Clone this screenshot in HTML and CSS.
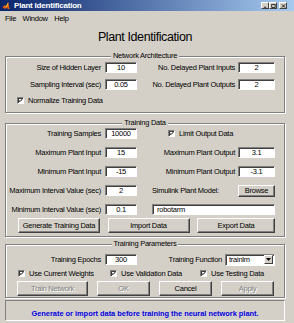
FILE: index.html
```html
<!DOCTYPE html>
<html lang="en">
<head>
    <meta charset="UTF-8">
    <title>Plant Identification</title>
    <link rel="stylesheet" href="styles.css">
</head>
<body>
    <!-- Title bar -->
    <div class="titlebar">
        <svg class="app-icon" viewBox="0 0 9 9">
            <path d="M0.5 6.5 L3 4 L4.5 5.5 L7 0.5 L8.5 8.5 L6.5 8.5 L5.5 6.5 L3.5 8.5 Z" fill="#e05a10"/>
            <path d="M3 4 L4.5 5.5 L7 0.5 L6.8 3.5 L4.8 7 Z" fill="#ffd020"/>
        </svg>
        <span class="title">Plant Identification</span>
        <div class="win-btns">
            <span class="wbtn"><svg viewBox="0 0 6 5"><rect x="1" y="3.5" width="3" height="1" fill="#000"/></svg></span>
            <span class="wbtn"><svg viewBox="0 0 6 5"><rect x="0.8" y="0.5" width="4.2" height="3.8" fill="none" stroke="#000" stroke-width="0.9"/></svg></span>
            <span class="wbtn wbtn-close"><svg viewBox="0 0 6 5"><path d="M1 0.5 L5 4.5 M5 0.5 L1 4.5" stroke="#000" stroke-width="1.1"/></svg></span>
        </div>
    </div>

    <!-- Menu bar -->
    <div class="menubar">
        <span>File</span>
        <span>Window</span>
        <span>Help</span>
    </div>

    <div class="panel">
        <h1 class="heading">Plant Identification</h1>

        <!-- Network Architecture -->
        <fieldset class="group group-arch">
            <legend>Network Architecture</legend>
            <div class="row">
                <div class="lbl c1">Size of Hidden Layer</div>
                <div class="edit e1">10</div>
                <div class="lbl c3">No. Delayed Plant Inputs</div>
                <div class="edit e2">2</div>
            </div>
            <div class="row">
                <div class="lbl c1">Sampling Interval (sec)</div>
                <div class="edit e1">0.05</div>
                <div class="lbl c3">No. Delayed Plant Outputs</div>
                <div class="edit e2">2</div>
            </div>
            <div class="row check-row norm-row">
                <span class="cb"><svg viewBox="0 0 7 7"><path d="M1 3.2 L2.8 5 L6 1.5" fill="none" stroke="#000" stroke-width="1.4"/></svg></span>
                <span>Normalize Training Data</span>
            </div>
        </fieldset>

        <!-- Training Data -->
        <fieldset class="group group-data">
            <legend>Training Data</legend>
            <div class="row">
                <div class="lbl c1">Training Samples</div>
                <div class="edit e1">10000</div>
                <div class="check limit-check">
                    <span class="cb"><svg viewBox="0 0 7 7"><path d="M1 3.2 L2.8 5 L6 1.5" fill="none" stroke="#000" stroke-width="1.4"/></svg></span>
                    <span>Limit Output Data</span>
                </div>
            </div>
            <div class="row">
                <div class="lbl c1">Maximum Plant Input</div>
                <div class="edit e1">15</div>
                <div class="lbl c3">Maximum Plant Output</div>
                <div class="edit e2">3.1</div>
            </div>
            <div class="row">
                <div class="lbl c1">Minimum Plant Input</div>
                <div class="edit e1">-15</div>
                <div class="lbl c3">Minimum Plant Output</div>
                <div class="edit e2">-3.1</div>
            </div>
            <div class="row">
                <div class="lbl c1">Maximum Interval Value (sec)</div>
                <div class="edit e1">2</div>
                <div class="lbl sim-lbl">Simulink Plant Model:</div>
                <div class="btn browse-btn">Browse</div>
            </div>
            <div class="row">
                <div class="lbl c1">Minimum Interval Value (sec)</div>
                <div class="edit e1">0.1</div>
                <div class="edit model-edit">robotarm</div>
            </div>
            <div class="btn-row data-btns">
                <div class="btn btn-gen">Generate Training Data</div>
                <div class="btn btn-import">Import Data</div>
                <div class="btn btn-export">Export Data</div>
            </div>
        </fieldset>

        <!-- Training Parameters -->
        <fieldset class="group group-train">
            <legend>Training Parameters</legend>
            <div class="row">
                <div class="lbl c1">Training Epochs</div>
                <div class="edit e1">300</div>
                <div class="lbl func-lbl">Training Function</div>
                <div class="popup">
                    <span>trainlm</span>
                    <span class="drop"><svg viewBox="0 0 5 3"><path d="M0 0 L5 0 L2.5 3 Z" fill="#000"/></svg></span>
                </div>
            </div>
            <div class="row check-row train-checks">
                <div class="check chk-weights">
                    <span class="cb"><svg viewBox="0 0 7 7"><path d="M1 3.2 L2.8 5 L6 1.5" fill="none" stroke="#000" stroke-width="1.4"/></svg></span>
                    <span>Use Current Weights</span>
                </div>
                <div class="check chk-valid">
                    <span class="cb"><svg viewBox="0 0 7 7"><path d="M1 3.2 L2.8 5 L6 1.5" fill="none" stroke="#000" stroke-width="1.4"/></svg></span>
                    <span>Use Validation Data</span>
                </div>
                <div class="check">
                    <span class="cb"><svg viewBox="0 0 7 7"><path d="M1 3.2 L2.8 5 L6 1.5" fill="none" stroke="#000" stroke-width="1.4"/></svg></span>
                    <span>Use Testing Data</span>
                </div>
            </div>
            <div class="btn-row train-btns">
                <div class="btn btn-train disabled">Train Network</div>
                <div class="btn btn-small disabled">OK</div>
                <div class="btn btn-small">Cancel</div>
                <div class="btn btn-small disabled">Apply</div>
            </div>
        </fieldset>

        <!-- Status line -->
        <div class="status">Generate or import data before training the neural network plant.</div>
    </div>
</body>
</html>
```

FILE: styles.css
```css
/* General Reset */
* {
    margin: 0;
    padding: 0;
    box-sizing: border-box;
}

body {
    width: 294px;
    height: 323px;
    overflow: hidden;
    background: #d4d0c8;
    font-family: 'Liberation Sans', Arial, sans-serif;
    font-size: 7.5px;
    letter-spacing: -0.25px;
    color: #000;
}

/* Title bar */
.titlebar {
    height: 11px;
    display: flex;
    align-items: center;
    padding-left: 2px;
    background: linear-gradient(to right, #0a246a, #a6caf0);
}

.app-icon {
    width: 8px;
    height: 9px;
}

.title {
    margin-left: 4px;
    color: #fff;
    font-weight: bold;
    font-size: 8px;
    letter-spacing: -0.2px;
    line-height: 11px;
}

.win-btns {
    margin-left: auto;
    padding-right: 7px;
    display: flex;
}

.wbtn {
    width: 8px;
    height: 7px;
    display: flex;
    align-items: center;
    justify-content: center;
    background: #d4d0c8;
    border: 1px solid;
    border-color: #fff #404040 #404040 #fff;
}

.wbtn svg {
    width: 5px;
    height: 4px;
}

.wbtn-close {
    margin-left: 2px;
}

/* Menu bar */
.menubar {
    height: 14px;
    display: flex;
    align-items: center;
    gap: 6.5px;
    padding-left: 5px;
}

/* Main panel */
.panel {
    padding-left: 5px;
    width: 285px;
}

.heading {
    margin-top: 5px;
    font-size: 12.5px;
    font-weight: normal;
    letter-spacing: -0.4px;
    line-height: 14px;
    text-align: center;
}

/* Etched group boxes */
.group {
    min-width: 0;
    border: 1px solid #808080;
    box-shadow: 1px 1px 0 #fff, inset 1px 1px 0 #fff;
}

.group legend {
    position: relative;
    margin: 0 auto;
    padding: 0 2px;
    line-height: 8px;
    background: #d4d0c8;
}

.group-arch {
    margin-top: 8px;
    padding: 2px 0 7px;
}

.group-data {
    margin-top: 6px;
    padding: 1px 0 3px;
}

.group-train {
    margin-top: 3px;
    padding: 6px 0 1px;
}

/* Rows */
.row {
    display: flex;
    align-items: center;
    height: 11px;
}

.group-arch .row + .row {
    margin-top: 6px;
}

.group-data .row + .row {
    margin-top: 8px;
}

.lbl {
    white-space: nowrap;
}

.c1 {
    width: 95px;
    margin-right: 4px;
    text-align: right;
}

.c3 {
    width: 98px;
    margin-right: 3px;
    text-align: right;
}

.sim-lbl {
    width: 86px;
    margin-left: 15px;
}

.func-lbl {
    width: 85px;
    margin-right: 3px;
    text-align: right;
}

/* Sunken edit fields */
.edit {
    height: 11px;
    line-height: 9px;
    text-align: center;
    background: #fff;
    border: 1px solid;
    border-color: #808080 #fff #fff #808080;
    box-shadow: inset 1px 1px 0 #404040;
}

.e1 {
    width: 32px;
}

.e2 {
    width: 37px;
}

.model-edit {
    width: 123px;
    margin-left: 15px;
    padding-left: 4px;
    text-align: left;
}

/* Check boxes */
.check-row {
    height: 9px;
}

.group-arch .norm-row {
    margin-top: 8px;
    padding-left: 11px;
}

.check {
    display: flex;
    align-items: center;
}

.cb {
    width: 7px;
    height: 7px;
    margin-right: 4px;
    display: flex;
    align-items: center;
    justify-content: center;
    background: #fff;
    border: 1px solid;
    border-color: #808080 #fff #fff #808080;
    box-shadow: inset 1px 1px 0 #404040;
}

.cb svg {
    width: 5px;
    height: 5px;
}

.limit-check {
    margin-left: 31px;
}

.train-checks {
    margin-top: 4px;
    padding-left: 12px;
}

.chk-weights {
    width: 92px;
}

.chk-valid {
    width: 90px;
}

/* Raised buttons */
.btn {
    height: 15px;
    display: flex;
    align-items: center;
    justify-content: center;
    white-space: nowrap;
    background: #d4d0c8;
    border: 1px solid;
    border-color: #fff #404040 #404040 #fff;
    box-shadow: inset -1px -1px 0 #808080;
}

.btn.disabled {
    color: #808080;
    text-shadow: 1px 1px 0 #fff;
}

.browse-btn {
    width: 37px;
    height: 12px;
}

.btn-row {
    display: flex;
}

.data-btns {
    margin-top: 3px;
    padding-left: 12px;
    gap: 7.5px;
}

.btn-gen,
.btn-import {
    width: 82px;
}

.btn-export {
    width: 78px;
}

.train-btns {
    margin-top: 3px;
    padding-left: 11px;
    gap: 9px;
}

.btn-train {
    width: 71px;
}

.btn-small {
    width: 53px;
}

/* Popup menu */
.popup {
    width: 50px;
    height: 12px;
    display: flex;
    align-items: center;
    padding-left: 3px;
    background: #fff;
    border: 1px solid;
    border-color: #808080 #fff #fff #808080;
    box-shadow: inset 1px 1px 0 #404040;
}

.drop {
    margin-left: auto;
    margin-right: 1px;
    width: 9px;
    height: 9px;
    display: flex;
    align-items: center;
    justify-content: center;
    background: #d4d0c8;
    border: 1px solid;
    border-color: #fff #404040 #404040 #fff;
}

.drop svg {
    width: 5px;
    height: 3px;
}

/* Status line */
.status {
    margin-top: 2px;
    height: 21px;
    padding-top: 8px;
    line-height: 9px;
    text-align: center;
    font-size: 7.4px;
    font-weight: bold;
    letter-spacing: 0;
    color: #0000e0;
    border: 1px solid;
    border-color: #808080 #fff #fff #808080;
}
```
